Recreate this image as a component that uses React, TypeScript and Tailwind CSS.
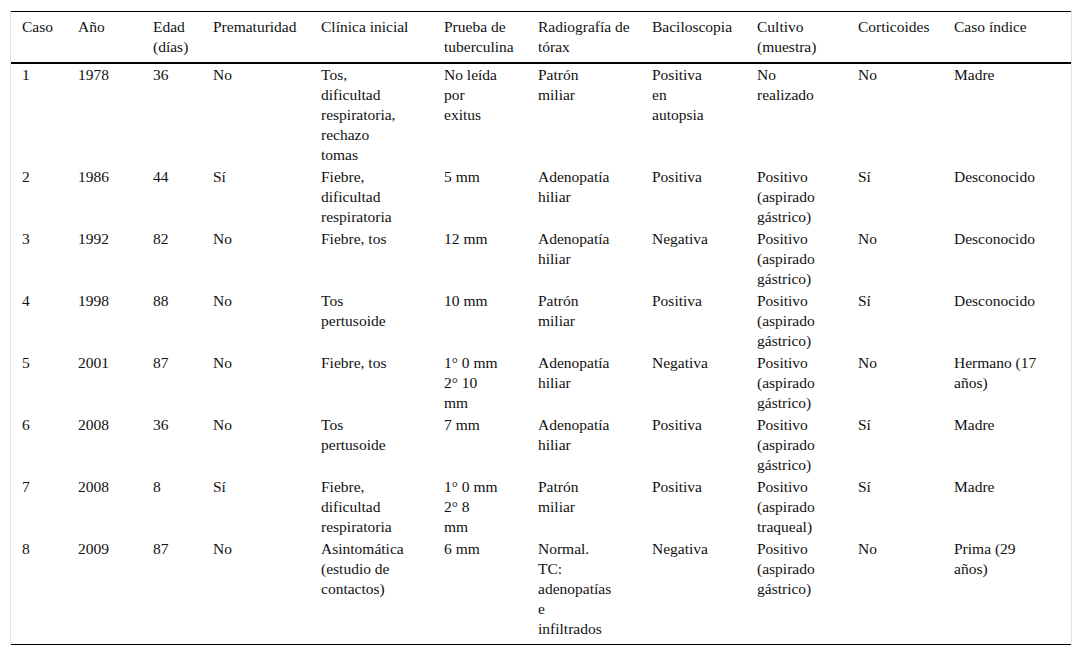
import React from "react";

const widths = [
  "w-[56px]",
  "w-[75px]",
  "w-[60px]",
  "w-[108px]",
  "w-[123px]",
  "w-[94px]",
  "w-[114px]",
  "w-[105px]",
  "w-[101px]",
  "w-[96px]",
  "w-[128px]",
];

const header: string[][] = [
  ["Caso"],
  ["Año"],
  ["Edad", "(días)"],
  ["Prematuridad"],
  ["Clínica inicial"],
  ["Prueba de", "tuberculina"],
  ["Radiografía de", "tórax"],
  ["Baciloscopia"],
  ["Cultivo", "(muestra)"],
  ["Corticoides"],
  ["Caso índice"],
];

const rows: string[][][] = [
  [
    ["1"], ["1978"], ["36"], ["No"],
    ["Tos,", "dificultad", "respiratoria,", "rechazo", "tomas"],
    ["No leída", "por", "exitus"],
    ["Patrón", "miliar"],
    ["Positiva", "en", "autopsia"],
    ["No", "realizado"],
    ["No"], ["Madre"],
  ],
  [
    ["2"], ["1986"], ["44"], ["Sí"],
    ["Fiebre,", "dificultad", "respiratoria"],
    ["5 mm"],
    ["Adenopatía", "hiliar"],
    ["Positiva"],
    ["Positivo", "(aspirado", "gástrico)"],
    ["Sí"], ["Desconocido"],
  ],
  [
    ["3"], ["1992"], ["82"], ["No"],
    ["Fiebre, tos"],
    ["12 mm"],
    ["Adenopatía", "hiliar"],
    ["Negativa"],
    ["Positivo", "(aspirado", "gástrico)"],
    ["No"], ["Desconocido"],
  ],
  [
    ["4"], ["1998"], ["88"], ["No"],
    ["Tos", "pertusoide"],
    ["10 mm"],
    ["Patrón", "miliar"],
    ["Positiva"],
    ["Positivo", "(aspirado", "gástrico)"],
    ["Sí"], ["Desconocido"],
  ],
  [
    ["5"], ["2001"], ["87"], ["No"],
    ["Fiebre, tos"],
    ["1° 0 mm", "2° 10", "mm"],
    ["Adenopatía", "hiliar"],
    ["Negativa"],
    ["Positivo", "(aspirado", "gástrico)"],
    ["No"], ["Hermano (17", "años)"],
  ],
  [
    ["6"], ["2008"], ["36"], ["No"],
    ["Tos", "pertusoide"],
    ["7 mm"],
    ["Adenopatía", "hiliar"],
    ["Positiva"],
    ["Positivo", "(aspirado", "gástrico)"],
    ["Sí"], ["Madre"],
  ],
  [
    ["7"], ["2008"], ["8"], ["Sí"],
    ["Fiebre,", "dificultad", "respiratoria"],
    ["1° 0 mm", "2° 8", "mm"],
    ["Patrón", "miliar"],
    ["Positiva"],
    ["Positivo", "(aspirado", "traqueal)"],
    ["Sí"], ["Madre"],
  ],
  [
    ["8"], ["2009"], ["87"], ["No"],
    ["Asintomática", "(estudio de", "contactos)"],
    ["6 mm"],
    ["Normal.", "TC:", "adenopatías", "e", "infiltrados"],
    ["Negativa"],
    ["Positivo", "(aspirado", "gástrico)"],
    ["No"], ["Prima (29", "años)"],
  ],
];

function Lines({ lines }: { lines: string[] }) {
  return (
    <>
      {lines.map((l, i) => (
        <React.Fragment key={i}>
          {i > 0 && <br />}
          {l}
        </React.Fragment>
      ))}
    </>
  );
}

export default function App() {
  return (
    <div className="min-h-[657px] bg-white px-[10px] pt-[10px] text-[#111] font-['Liberation_Serif','Times_New_Roman',serif]">
      <div className="border-l border-r border-[#e4e4e4] pt-px">
        <table className="w-full table-fixed border-separate border-spacing-0 text-[15.5px] leading-[20px] font-['Liberation_Serif','Times_New_Roman',serif]">
          <thead>
            <tr>
              {header.map((h, i) => (
                <th
                  key={i}
                  className={`${widths[i]} whitespace-nowrap border-t border-b-2 border-black pl-[11px] pt-[5px] pb-[5px] text-left align-top font-normal`}
                >
                  <Lines lines={h} />
                </th>
              ))}
            </tr>
          </thead>
          <tbody>
            {rows.map((r, ri) => {
              const last = ri === rows.length - 1;
              return (
                <tr key={ri}>
                  {r.map((c, ci) => (
                    <td
                      key={ci}
                      className={
                        last
                          ? "whitespace-nowrap border-b border-black pl-[11px] pt-px pb-[5px] text-left align-top"
                          : "whitespace-nowrap pl-[11px] pt-px pb-px text-left align-top"
                      }
                    >
                      <Lines lines={c} />
                    </td>
                  ))}
                </tr>
              );
            })}
          </tbody>
        </table>
      </div>
    </div>
  );
}
